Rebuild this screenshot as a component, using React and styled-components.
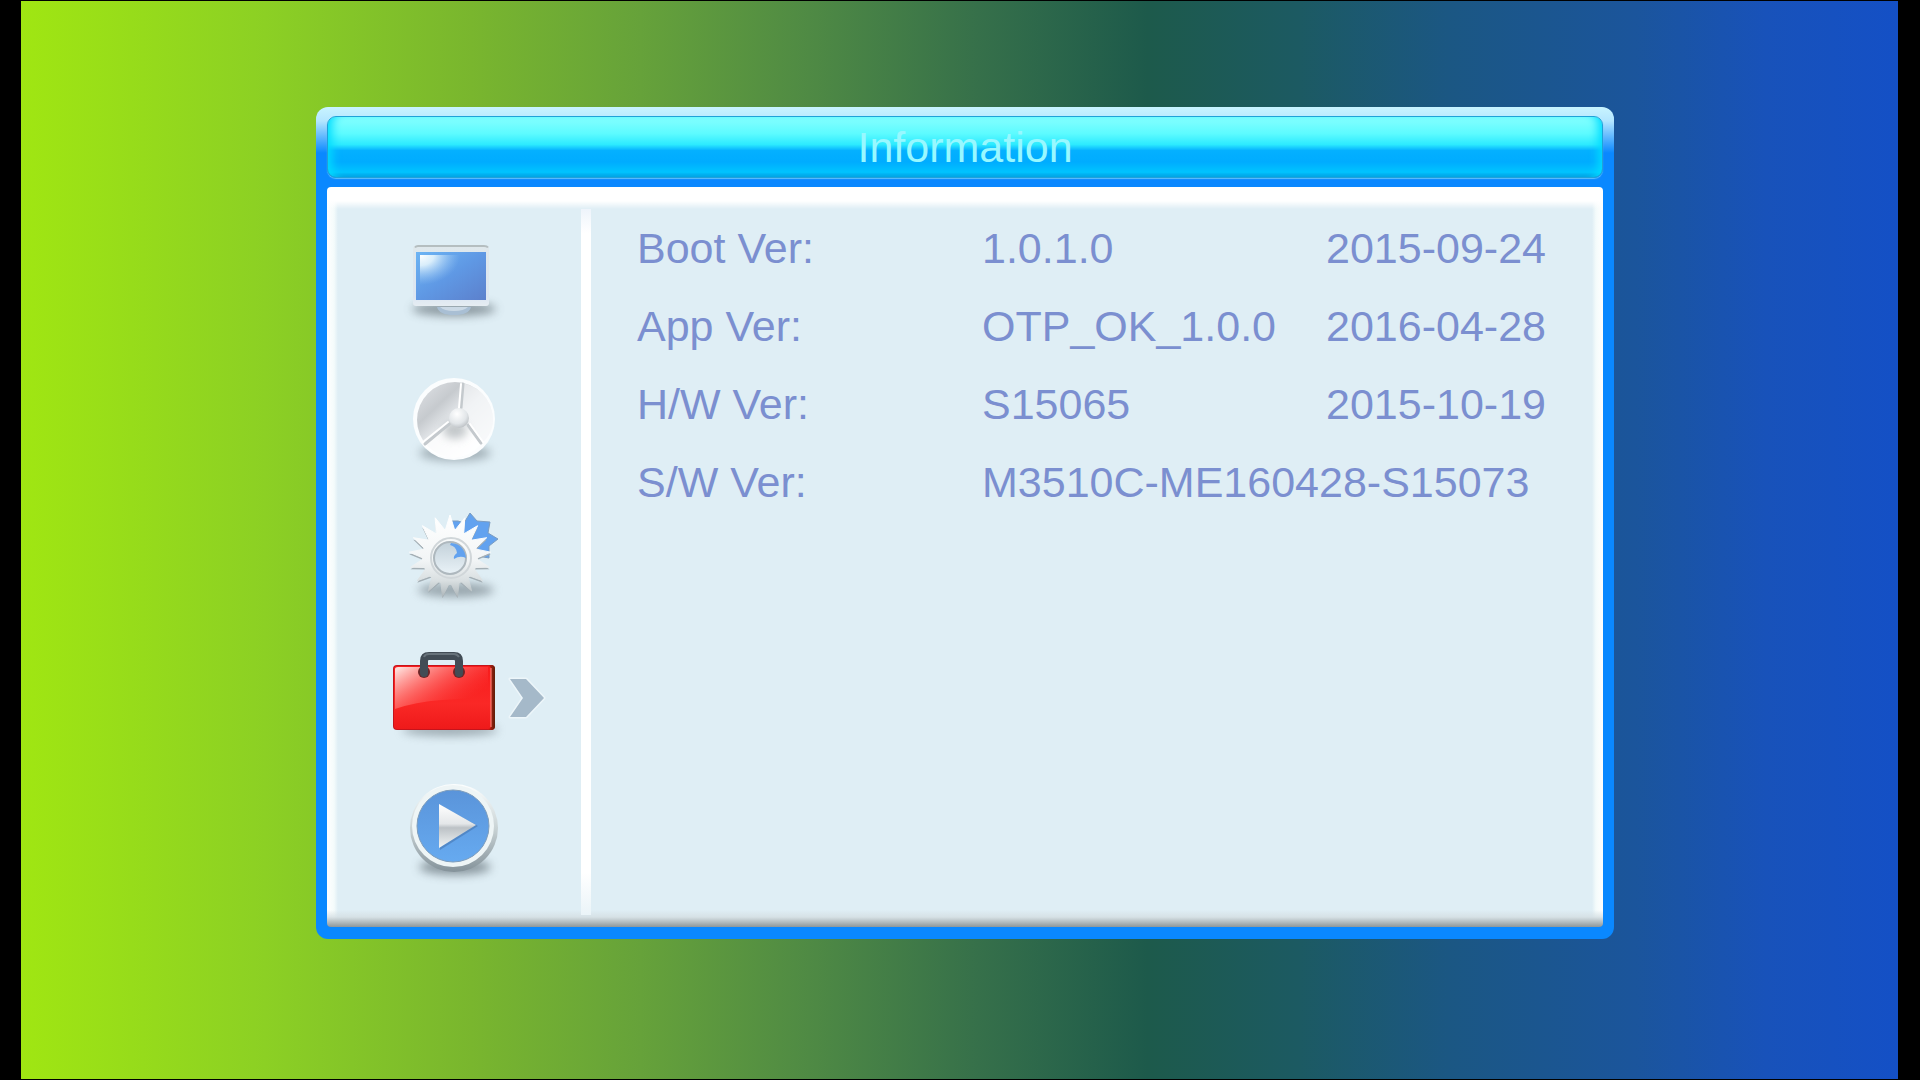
import React, { useState } from 'react';
import styled, { createGlobalStyle } from 'styled-components';

const GlobalStyle = createGlobalStyle`
    * {
        box-sizing: border-box;
    }

    body {
        margin: 0;
        background: #000;
        font-family: 'Liberation Sans', Arial, sans-serif;
    }
`;

// styled-components
const Screen = styled.div`
    min-height: 100vh;
    display: flex;
    padding: 1px 22px 1px 21px;
    background: #000;
`;

const Backdrop = styled.div`
    flex: 1;
    display: flex;
    padding: 106px 284px 140px 295px;
    background: linear-gradient(
        to right,
        #a0e612 0%,
        #8cd024 13%,
        #79b62e 24%,
        #66a23a 33%,
        #4f8a44 42%,
        #36704a 51%,
        #1d5a4b 60%,
        #1c5a62 68%,
        #1b5783 76%,
        #1b559c 86%,
        #1852ba 93%,
        #1450c6 100%
    );
`;

const Panel = styled.main`
    flex: 1;
    display: flex;
    flex-direction: column;
    gap: 9px;
    padding: 9px 11px 12px;
    border-radius: 12px;
    background: linear-gradient(to bottom, #c8f4ff 0, #b4e6ff 14px, #0a88ff 46px);
`;

const TitleBar = styled.header`
    height: 62px;
    display: flex;
    align-items: center;
    justify-content: center;
    border: 1px solid #1fa2d8;
    border-radius: 9px;
    background: linear-gradient(
        to bottom,
        #86ffff 0%,
        #5cfbff 28%,
        #2ceaff 46%,
        #04b0ff 56%,
        #00acff 75%,
        #00c4ff 92%,
        #0098e0 100%
    );
    box-shadow: inset 10px 0 10px -6px #00dcff, inset -10px 0 10px -6px #00dcff, 0 1px 1px #5cc0ff;
`;

const Title = styled.h1`
    margin: 0;
    font-size: 43px;
    line-height: 48px;
    font-weight: normal;
    color: #98f8ff;
`;

const Body = styled.div`
    flex: 1;
    display: flex;
    padding: 22px 0 12px;
    border-radius: 4px;
    background: linear-gradient(to top, #8e979a 0, #b4bdc0 5px, rgba(212, 222, 226, 0.8) 10px, rgba(223, 238, 245, 0) 17px),
        linear-gradient(to bottom, #fff 0, #fff 14px, rgba(255, 255, 255, 0) 22px),
        linear-gradient(to right, #fff 0, #f4fbfb 7px, rgba(255, 255, 255, 0) 11px),
        linear-gradient(to left, #fff 0, #f4fbfb 7px, rgba(255, 255, 255, 0) 11px),
        #dfeef5;
`;

const SideMenu = styled.nav`
    width: 254px;
    display: flex;
    flex-direction: column;
    align-items: center;
`;

const MenuButton = styled.button`
    height: 138px;
    padding: 0;
    border: none;
    background: none;
    cursor: pointer;

    svg {
        display: block;
    }
`;

const Divider = styled.div`
    width: 10px;
    background: linear-gradient(to bottom, #eef4fb 0, #fff 24px, #fff 94%, #eaf4f8 100%);
`;

const Content = styled.section`
    flex: 1;
    padding-left: 46px;
`;

const InfoTable = styled.table`
    width: 100%;
    table-layout: fixed;
    border-collapse: collapse;
    color: #7b8fd0;
    font-size: 43px;
    line-height: 78px;
    text-align: left;
`;

const Label = styled.th`
    width: 345px;
    padding: 0;
    font-weight: normal;
`;

const Value = styled.td`
    padding: 0;
    white-space: nowrap;
`;

const DateCell = styled(Value)`
    width: 277px;
`;

const rows = [
    { label: 'Boot Ver:', value: '1.0.1.0', date: '2015-09-24' },
    { label: 'App Ver:', value: 'OTP_OK_1.0.0', date: '2016-04-28' },
    { label: 'H/W Ver:', value: 'S15065', date: '2015-10-19' },
    { label: 'S/W Ver:', value: 'M3510C-ME160428-S15073' },
];

const gearPoints = (cx, cy, outer, inner, teeth) => {
    const points = [];
    for (let i = 0; i < teeth * 2; i++) {
        const radius = i % 2 ? inner : outer;
        const angle = (Math.PI * i) / teeth - Math.PI / 2;
        points.push(`${(cx + radius * Math.cos(angle)).toFixed(1)},${(cy + radius * Math.sin(angle)).toFixed(1)}`);
    }
    return points.join(' ');
};

const Icon = ({ children }) => (
    <svg width="200" height="138" viewBox="0 0 200 138" aria-hidden="true">
        {children}
    </svg>
);

const Shadow = ({ id, cx = 100, cy, rx = 42, ry = 8, opacity = 0.55 }) => (
    <>
        <filter id={id} x="-40%" y="-150%" width="180%" height="400%">
            <feGaussianBlur stdDeviation="5" />
        </filter>
        <ellipse cx={cx} cy={cy} rx={rx} ry={ry} fill="#6f7d84" opacity={opacity} filter={`url(#${id})`} />
    </>
);

const MonitorIcon = () => (
    <Icon>
        <defs>
            <linearGradient id="tvScreen" x1="0" y1="0" x2="1" y2="1">
                <stop offset="0" stopColor="#6cb4f4" />
                <stop offset="0.5" stopColor="#5f98e4" />
                <stop offset="1" stopColor="#5c80cc" />
            </linearGradient>
            <radialGradient id="tvGlow" cx="0" cy="0" r="1">
                <stop offset="0" stopColor="#fff" />
                <stop offset="0.35" stopColor="#e6f5fc" stopOpacity="0.9" />
                <stop offset="1" stopColor="#9cc8f4" stopOpacity="0" />
            </radialGradient>
            <linearGradient id="tvFrame" x1="0" y1="0" x2="0" y2="1">
                <stop offset="0" stopColor="#dfe8ec" />
                <stop offset="0.85" stopColor="#dce6f2" />
                <stop offset="1" stopColor="#e6edf2" />
            </linearGradient>
        </defs>
        <Shadow id="tvShadow" cy={100} rx={42} ry={7} opacity={0.75} />
        <rect x="59" y="37" width="76" height="60" rx="3" fill="url(#tvFrame)" />
        <path d="M61 38.500q1-1.500 3-1.500h66q3 0 4 1.500" fill="none" stroke="#b5bec0" strokeWidth="2" />
        <rect x="62" y="43" width="70" height="48" fill="url(#tvScreen)" />
        <rect x="66" y="46" width="40" height="30" fill="url(#tvGlow)" />
        <path d="M83 98h34q-2 8-17 8t-17-8z" fill="#a9bfd4" />
        <path d="M86 98h28q-4 4-14 4t-14-4z" fill="#cbd9e5" />
    </Icon>
);

const DishIcon = () => (
    <Icon>
        <defs>
            <linearGradient id="dishFace" x1="0.15" y1="0.1" x2="0.8" y2="0.8">
                <stop offset="0" stopColor="#d6d9dd" />
                <stop offset="0.25" stopColor="#c6cace" />
                <stop offset="0.55" stopColor="#eaedf0" />
                <stop offset="1" stopColor="#fcfdfe" />
            </linearGradient>
            <radialGradient id="dishHub" cx="0.4" cy="0.3" r="0.8">
                <stop offset="0" stopColor="#fff" />
                <stop offset="0.6" stopColor="#e2e6e9" />
                <stop offset="1" stopColor="#b0b5b9" />
            </radialGradient>
            <filter id="dishSoft" x="-50%" y="-50%" width="200%" height="200%">
                <feGaussianBlur stdDeviation="4" />
            </filter>
        </defs>
        <Shadow id="dishShadow" cx={101} cy={106} rx={36} ry={8} />
        <circle cx="100" cy="72" r="41" fill="#fbfdfe" />
        <circle cx="101" cy="73" r="38" fill="url(#dishFace)" />
        <path d="M105 72 108 36Q135 42 139 70 140 86 127 97z" fill="#f4f6f8" opacity="0.65" />
        <path d="M105 72 69 98Q84 112 101 111 117 109 127 97z" fill="#fff" opacity="0.75" />
        <ellipse cx="101" cy="83" rx="12" ry="9" fill="#9ea5a9" opacity="0.6" filter="url(#dishSoft)" />
        <g fill="none" strokeLinecap="round">
            <path d="M107 61 109 37M95 77 71 97M114 78 127 96" stroke="#c4c9cd" strokeWidth="3" />
            <path d="M105 61 107 37M94 75 69 95M116 77 129 95" stroke="#fff" strokeWidth="2" />
        </g>
        <circle cx="105" cy="71" r="10" fill="url(#dishHub)" />
    </Icon>
);

const GearIcon = () => (
    <Icon>
        <defs>
            <linearGradient id="gearMetal" x1="0" y1="30" x2="0" y2="112" gradientUnits="userSpaceOnUse">
                <stop offset="0" stopColor="#fff" />
                <stop offset="0.55" stopColor="#f2f5f6" />
                <stop offset="0.8" stopColor="#d9dfe1" />
                <stop offset="1" stopColor="#adb6ba" />
            </linearGradient>
            <linearGradient id="gearHole" x1="0" y1="0" x2="0" y2="1">
                <stop offset="0" stopColor="#c3d1da" />
                <stop offset="1" stopColor="#e9f2f7" />
            </linearGradient>
        </defs>
        <Shadow id="gearShadow" cx={102} cy={105} rx={38} ry={7} opacity={0.65} />
        <path
            d="M98 36 104 36 110 38 116 28 123 36 136 37 134 48 144 54 135 61 135 73 124 71 100 62z"
            fill="#62a2ef"
            stroke="#7b9cc0"
            strokeWidth="1"
            strokeLinejoin="round"
        />
        <polygon points={gearPoints(96, 73, 41, 26, 17)} fill="#a4afb5" strokeLinejoin="round" />
        <polygon
            points={gearPoints(96, 71, 41, 26, 17)}
            fill="url(#gearMetal)"
            stroke="url(#gearMetal)"
            strokeWidth="1"
            strokeLinejoin="round"
        />
        <circle cx="96" cy="72" r="28" fill="url(#gearMetal)" />
        <circle cx="97" cy="73" r="20" fill="none" stroke="#d0d6d9" strokeWidth="2" />
        <circle cx="96" cy="73" r="16" fill="url(#gearHole)" stroke="#aeb8be" strokeWidth="2" />
        <path d="M97 58Q110 59 112 73Q106 70 100 74 99 71 103 68 102 61 96 60z" fill="#62a2ef" />
    </Icon>
);

const ToolboxIcon = ({ active }) => (
    <Icon>
        <defs>
            <linearGradient id="boxFace" x1="0" y1="0" x2="0" y2="1">
                <stop offset="0" stopColor="#f81c1c" />
                <stop offset="0.6" stopColor="#fa2826" />
                <stop offset="1" stopColor="#ee1a1a" />
            </linearGradient>
            <linearGradient id="boxShine" x1="0" y1="0.1" x2="0.85" y2="0.7">
                <stop offset="0" stopColor="#ffe4e0" stopOpacity="0.95" />
                <stop offset="0.4" stopColor="#ff8c88" stopOpacity="0.7" />
                <stop offset="1" stopColor="#ff4040" stopOpacity="0" />
            </linearGradient>
            <linearGradient id="boxSide" x1="0" y1="0" x2="1" y2="0">
                <stop offset="0" stopColor="#d01814" />
                <stop offset="1" stopColor="#5c2008" />
            </linearGradient>
        </defs>
        <Shadow id="boxShadow" cx={96} cy={107} rx={48} ry={6} opacity={0.6} />
        <rect x="39" y="42" width="102" height="65" rx="4" fill="#c5141c" />
        <path d="M134 42h3q4 0 4 4v57q0 4-4 4h-3z" fill="url(#boxSide)" />
        <rect x="40" y="43" width="97" height="63" rx="3" fill="url(#boxFace)" />
        <path d="M41 46q0-2 3-2h90v28Q116 76 88 77 61 79 41 86z" fill="url(#boxShine)" />
        <path d="M137 45v59" stroke="#ff9080" strokeWidth="1" />
        <circle cx="70" cy="49" r="6" fill="#6c2628" />
        <circle cx="105" cy="49" r="6" fill="#6c2628" />
        <path d="M70 50V38q0-5 5-5h25q5 0 5 5v12" fill="none" stroke="#424c55" strokeWidth="8" strokeLinecap="round" />
        <path d="M70 34q1-3 5-3h25q3 0 5 3" fill="none" stroke="#67727a" strokeWidth="2" />
        {active && (
            <path
                d="M156 56h16l18 19-18 19h-16l13-19z"
                fill="#a5b9c9"
                stroke="#edf6fa"
                strokeWidth="3"
                strokeLinejoin="round"
                paintOrder="stroke"
            />
        )}
    </Icon>
);

const PlayIcon = () => (
    <Icon>
        <defs>
            <linearGradient id="playRing" x1="0" y1="0" x2="0" y2="1">
                <stop offset="0" stopColor="#fdffff" />
                <stop offset="0.5" stopColor="#c9d3d5" />
                <stop offset="1" stopColor="#84929a" />
            </linearGradient>
            <linearGradient id="playFace" x1="0" y1="0" x2="0" y2="1">
                <stop offset="0" stopColor="#5a94da" />
                <stop offset="1" stopColor="#66aaf0" />
            </linearGradient>
            <linearGradient id="playArrow" x1="0" y1="0" x2="0" y2="1">
                <stop offset="0" stopColor="#fff" />
                <stop offset="0.45" stopColor="#e4e7e9" />
                <stop offset="0.54" stopColor="#bcc2c6" />
                <stop offset="1" stopColor="#f2f5f6" />
            </linearGradient>
        </defs>
        <Shadow id="playShadow" cx={101} cy={106} rx={36} ry={8} opacity={0.75} />
        <circle cx="100" cy="67" r="44" fill="url(#playRing)" />
        <circle cx="99" cy="65" r="41" fill="#eef5f6" />
        <circle cx="99" cy="65" r="36" fill="url(#playFace)" stroke="#7c9cbc" strokeWidth="1" />
        <path d="M86 44 124 65 86 89z" fill="#3f6ea8" opacity="0.5" />
        <path d="M85 43 122 64 85 87z" fill="url(#playArrow)" />
    </Icon>
);

const menu = [
    { name: 'Program', icon: MonitorIcon },
    { name: 'Installation', icon: DishIcon },
    { name: 'System setup', icon: GearIcon },
    { name: 'Tools', icon: ToolboxIcon },
    { name: 'Media player', icon: PlayIcon },
];

const App = () => {
    const [selected, setSelected] = useState('Tools');

    return (
        <Screen>
            <GlobalStyle />
            <Backdrop>
                <Panel>
                    <TitleBar>
                        <Title>Information</Title>
                    </TitleBar>
                    <Body>
                        <SideMenu>
                            {menu.map(({ name, icon: MenuIcon }) => (
                                <MenuButton
                                    key={name}
                                    type="button"
                                    aria-label={name}
                                    aria-pressed={selected === name}
                                    onClick={() => setSelected(name)}
                                >
                                    <MenuIcon active={selected === name} />
                                </MenuButton>
                            ))}
                        </SideMenu>
                        <Divider />
                        <Content>
                            <InfoTable>
                                <tbody>
                                    {rows.map(row => (
                                        <tr key={row.label}>
                                            <Label scope="row">{row.label}</Label>
                                            <Value colSpan={row.date ? 1 : 2}>{row.value}</Value>
                                            {row.date && <DateCell>{row.date}</DateCell>}
                                        </tr>
                                    ))}
                                </tbody>
                            </InfoTable>
                        </Content>
                    </Body>
                </Panel>
            </Backdrop>
        </Screen>
    );
};

export default App;
